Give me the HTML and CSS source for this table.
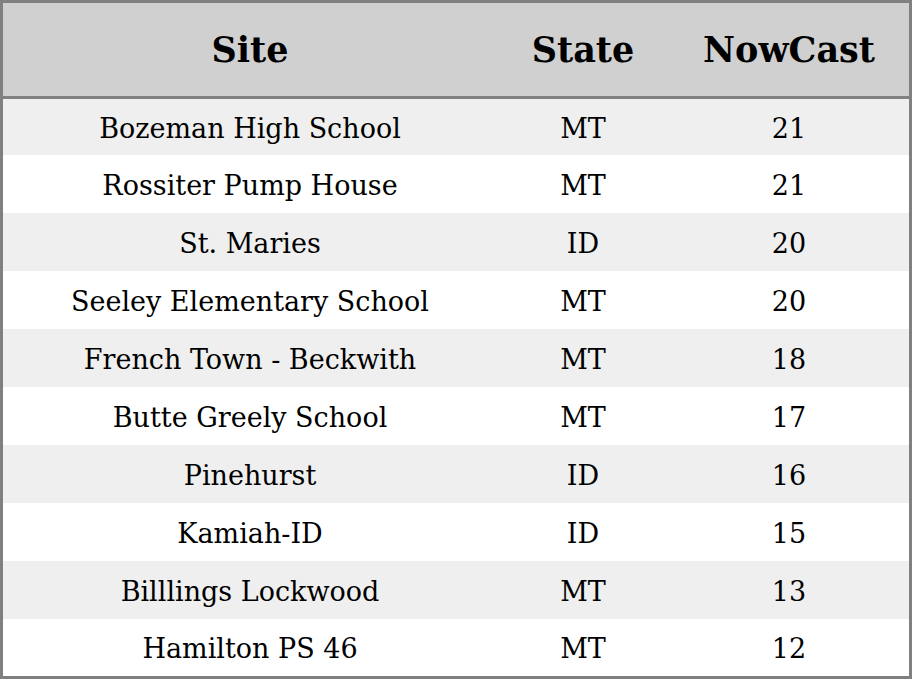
FILE: index.html
```html
<!DOCTYPE html>
<html>
<head>
<meta charset="utf-8">
<link rel="stylesheet" href="styles.css">
</head>
<body>
<table class="grid">
  <colgroup><col class="c-site"><col class="c-state"><col class="c-now"></colgroup>
  <thead>
    <tr><th>Site</th><th>State</th><th>NowCast</th></tr>
  </thead>
  <tbody>
    <tr class="first"><td>Bozeman High School</td><td>MT</td><td>21</td></tr>
    <tr><td>Rossiter Pump House</td><td>MT</td><td>21</td></tr>
    <tr><td>St. Maries</td><td>ID</td><td>20</td></tr>
    <tr><td>Seeley Elementary School</td><td>MT</td><td>20</td></tr>
    <tr><td>French Town - Beckwith</td><td>MT</td><td>18</td></tr>
    <tr><td>Butte Greely School</td><td>MT</td><td>17</td></tr>
    <tr><td>Pinehurst</td><td>ID</td><td>16</td></tr>
    <tr><td>Kamiah-ID</td><td>ID</td><td>15</td></tr>
    <tr><td>Billlings Lockwood</td><td>MT</td><td>13</td></tr>
    <tr class="last"><td>Hamilton PS 46</td><td>MT</td><td>12</td></tr>
  </tbody>
</table>
</body>
</html>
```
FILE: styles.css
```css
html, body {
  margin: 0;
  padding: 0;
  background: #ffffff;
}
.grid {
  width: 912px;
  height: 679px;
  border-collapse: separate;
  border-spacing: 0;
  border: 3px solid #808080;
  font-family: "DejaVu Serif", serif;
  color: #000;
  table-layout: fixed;
}
.c-site { width: 494px; }
.c-state { width: 172px; }
.c-now { width: 240px; }
.grid th {
  background: #d0d0d0;
  font-weight: bold;
  font-size: 35px;
  height: 93px;
  padding: 0;
  text-align: center;
  vertical-align: middle;
  border-bottom: 3px solid #808080;
}
.grid td {
  font-size: 27px;
  line-height: 32px;
  padding: 3px 0 0 0;
  text-align: center;
  vertical-align: middle;
  height: 55px;
}
.grid tr.first td { height: 53px; }
.grid tr.last td { height: 54px; }
.grid tbody tr:nth-child(odd) { background: #efefef; }
.grid tbody tr:nth-child(even) { background: #ffffff; }
```
